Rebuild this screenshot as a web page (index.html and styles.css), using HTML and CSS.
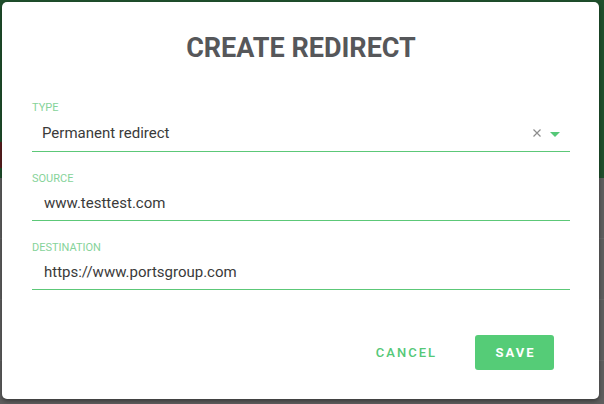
FILE: index.html
```html
<!DOCTYPE html>
<html>
<head>
<meta charset="utf-8">
<link rel="stylesheet" href="styles.css">
</head>
<body>
<div class="page">
  <div class="page-header"><div class="flag"></div></div>
  <div class="page-body">
    <div class="row"></div>
    <div class="row"></div>
    <div class="row"></div>
  </div>
</div>
<div class="dialog">
  <h1 class="title">CREATE REDIRECT</h1>
  <div class="field field-type">
    <label class="label">TYPE</label>
    <div class="control select">
      <span class="value">Permanent redirect</span>
      <span class="icons">
        <svg class="clear" width="8" height="8" viewBox="0 0 8 8"><path d="M0.5 0.5L7.5 7.5M7.5 0.5L0.5 7.5" stroke="#8c8c8c" stroke-width="1.2" fill="none"/></svg>
        <svg class="caret" width="10" height="5" viewBox="0 0 10 5"><path d="M0 0H10L5 5Z" fill="#55c878"/></svg>
      </span>
    </div>
  </div>
  <div class="field">
    <label class="label">SOURCE</label>
    <div class="control input"><span class="value">www.testtest.com</span></div>
  </div>
  <div class="field">
    <label class="label">DESTINATION</label>
    <div class="control input"><span class="value">https://www.portsgroup.com</span></div>
  </div>
  <div class="actions">
    <button class="btn btn-text">CANCEL</button>
    <button class="btn btn-primary">SAVE</button>
  </div>
</div>
</body>
</html>
```
FILE: styles.css
```css
html, body {
  margin: 0;
  padding: 0;
  width: 604px;
  height: 404px;
  overflow: hidden;
  background: #5e5e5e;
  font-family: Roboto, "Liberation Sans", sans-serif;
}
.page {
  width: 604px;
  height: 404px;
  display: flex;
  flex-direction: column;
}
.page-header {
  height: 178px;
  background: #1f4f2c;
  position: relative;
}
.flag {
  position: absolute;
  left: 0;
  top: 142px;
  width: 6px;
  height: 26px;
  background: #5a1e1e;
}
.page-body {
  flex: 1;
  display: flex;
  flex-direction: column;
}
.row {
  height: 60px;
  border-bottom: 1px solid #666;
}
.dialog {
  position: absolute;
  left: 2px;
  top: 2px;
  width: 597px;
  height: 397px;
  box-sizing: border-box;
  background: #fff;
  border-radius: 5px;
  box-shadow: 0 2px 4px rgba(0,0,0,0.4);
  padding: 0 29px 0 30px;
  display: flex;
  flex-direction: column;
}
.title {
  margin: 30px 0 0;
  text-align: center;
  font-size: 27px;
  line-height: 32px;
  font-weight: 700;
  color: #56575a;
}
.field {
  display: flex;
  flex-direction: column;
  margin-top: 20px;
}
.field-type { margin-top: 37px; }
.label {
  font-size: 11px;
  line-height: 13px;
  color: #86d39a;
}
.control {
  box-sizing: border-box;
  border-bottom: 1px solid #5cc878;
  display: flex;
  align-items: center;
  font-size: 15px;
  color: #3a3a3a;
}
.select { height: 38px; padding-left: 10px; }
.input { height: 36px; padding-left: 12px; padding-top: 1px; }
.value { flex: 1; }
.icons {
  display: flex;
  align-items: center;
  gap: 9px;
  padding-right: 10px;
}
.caret { margin-top: 3px; }
.actions {
  display: flex;
  justify-content: flex-end;
  align-items: center;
  margin-top: 45px;
  padding-right: 16px;
  gap: 38px;
}
.btn {
  font-family: Roboto, "Liberation Sans", sans-serif;
  font-size: 13px;
  letter-spacing: 2px;
  border: none;
  cursor: pointer;
}
.btn-text {
  background: none;
  color: #55c878;
  font-weight: 500;
  padding: 0;
}
.btn-primary {
  width: 79px;
  height: 35px;
  background: #55cc77;
  color: #fff;
  font-weight: 700;
  border-radius: 3px;
  padding: 0 0 0 2px;
}
```
